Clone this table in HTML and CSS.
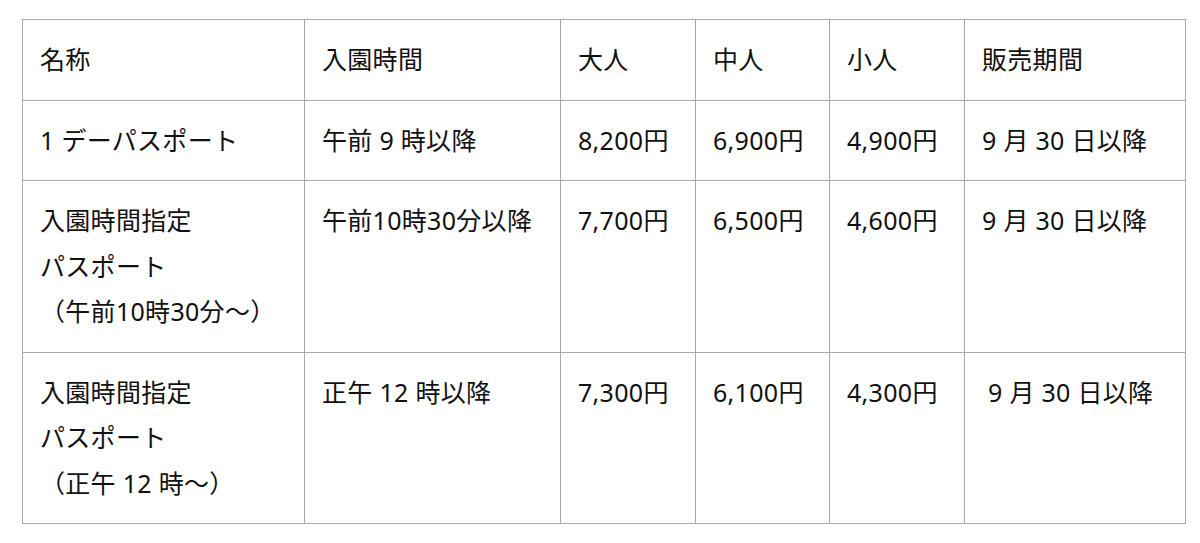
FILE: index.html
```html
<!DOCTYPE html>
<html lang="ja">
<head>
<meta charset="utf-8">
<title>料金表</title>
<link rel="stylesheet" href="styles.css">
</head>
<body>
<table class="price-table">
  <colgroup>
    <col class="c-name">
    <col class="c-time">
    <col class="c-adult">
    <col class="c-mid">
    <col class="c-child">
    <col class="c-sale">
  </colgroup>
  <tr>
    <td>名称</td>
    <td>入園時間</td>
    <td>大人</td>
    <td>中人</td>
    <td>小人</td>
    <td>販売期間</td>
  </tr>
  <tr>
    <td>1 デーパスポート</td>
    <td>午前 9 時以降</td>
    <td>8,200円</td>
    <td>6,900円</td>
    <td>4,900円</td>
    <td>9 月 30 日以降</td>
  </tr>
  <tr>
    <td>入園時間指定<br>パスポート<br>（午前10時30分～）</td>
    <td>午前10時30分以降</td>
    <td>7,700円</td>
    <td>6,500円</td>
    <td>4,600円</td>
    <td>9 月 30 日以降</td>
  </tr>
  <tr>
    <td>入園時間指定<br>パスポート<br>（正午 12 時～）</td>
    <td>正午 12 時以降</td>
    <td>7,300円</td>
    <td>6,100円</td>
    <td>4,300円</td>
    <td><span class="shift">9 月 30 日以降</span></td>
  </tr>
</table>
</body>
</html>
```

FILE: styles.css
```css
html, body {
  margin: 0;
  padding: 0;
  background: #fff;
}
body {
  padding: 19px 0 0 22px;
  font-family: "Noto Sans", "Noto Sans CJK JP", sans-serif;
  color: #111;
}
.price-table {
  border-collapse: collapse;
  table-layout: fixed;
  width: 1163px;
}
.c-name { width: 282px; }
.c-time { width: 256px; }
.c-adult { width: 135px; }
.c-mid { width: 134px; }
.c-child { width: 135px; }
.c-sale { width: 221px; }
.price-table td {
  border: 1.5px solid #a9a9a9;
  padding: 17px 0 17px 17px;
  font-size: 25px;
  line-height: 45.5px;
  letter-spacing: 0.3px;
  vertical-align: top;
  white-space: nowrap;
}
.shift {
  padding-left: 6px;
}
```
